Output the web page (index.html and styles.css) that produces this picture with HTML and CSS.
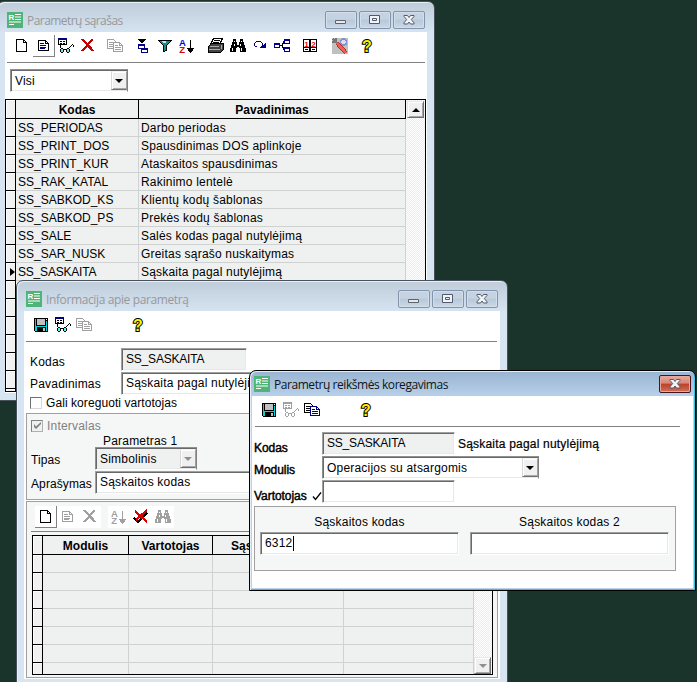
FILE: index.html
```html
<!DOCTYPE html>
<html lang="lt">
<head>
<meta charset="utf-8">
<title>Parametrų sąrašas</title>
<link rel="stylesheet" href="styles.css">
</head>
<body>
<svg class="defs" aria-hidden="true">
  <symbol id="logo" viewBox="0 0 16 16">
    <path fill="#4fb477" d="M0 0h16v16H0z"/>
    <text x="1.5" y="8" font-family="Liberation Sans" font-size="8" font-weight="bold" fill="#fff">R</text>
    <path fill="#fff" d="M8 2h6v1H8zM8 4.500h6v1H8zM8 7h6v1H8zM2 9.500h12v1H2zM2 12h5v1H2z"/>
  </symbol>
  <symbol id="page" viewBox="0 0 16 16">
    <path fill="#fff" stroke="#000" d="M2.500 1.500h7l3 3v9h-10z"/>
    <path fill="none" stroke="#000" d="M9.500 1.500v3h3"/>
  </symbol>
  <symbol id="sheet" viewBox="0 0 16 16">
    <path fill="#fff" stroke="currentColor" d="M2.500 2.500h7l3 3v7h-10z"/>
    <path fill="none" stroke="currentColor" d="M9.500 2.500v3h3"/>
    <path class="ink" d="M4 5h4v1H4zM4 7h6v1H4zM4 9h6v1H4zM4 11h5v-1H4z"/>
  </symbol>
  <symbol id="view" viewBox="0 0 16 16">
    <path fill="#fff" stroke="currentColor" d="M.5.5h8v6h-8z"/>
    <path class="ink" d="M0 0h9v2H0z"/>
    <path fill="currentColor" d="M2 3h2v1H2zM5 3h2v1H5zM2 5h2v1H2zM5 5h2v1H5zM2 7h1v3H2zM6 11h2v1H6zM11 9h1v1h-1zM12 8h1v1h-1zM13 7h1v1h-1zM14 6h1v1h-1zM15 7h1v2h-1z"/>
    <path fill="currentColor" d="M3 10h2v1h1v3H5v1H3v-1H2v-3h1zM9 10h2v1h1v3h-1v1H9v-1H8v-3h1z"/>
    <path class="lens" d="M3 11h2v3H3zM9 11h2v3H9z"/>
  </symbol>
  <symbol id="cross" viewBox="0 0 16 16">
    <path fill="currentColor" d="M1 1h2l4 4 5-4h1v1L9 7l3 3 2 3h-2L7 9l-4 4H1v-1l5-5-5-5z"/>
  </symbol>
  <symbol id="copy" viewBox="0 0 16 16">
    <path fill="#fff" stroke="currentColor" d="M.5 1.500h6l2 2v7h-8z"/>
    <path fill="currentColor" d="M2 4h4v1H2zM2 6h4v1H2zM2 8h4v1H2z"/>
    <path class="back" fill="#fff" d="M6.500 4.500h6l3 3v6h-9z"/>
    <path class="ink" d="M8 7h3v1H8zM8 9h6v1H8zM8 11h6v1H8zM12 5h1v2h2v1h-3z"/>
  </symbol>
  <symbol id="locate" viewBox="0 0 16 16">
    <path fill="#000" d="M3 1h8v1h-1v1H9v1H8v1H6V4H5V3H4V2H3z"/>
    <path fill="#fff" stroke="#000080" d="M3.500 6.500h6v4h-6zM6.500 10.500h6v4h-6z"/>
    <path fill="#000080" d="M3 6h7v2H3zM6 10h7v2H6z"/>
  </symbol>
  <symbol id="funnel" viewBox="0 0 16 16">
    <path fill="#208888" stroke="#000" d="M1.500 2.500h13l-5 5v5l-3 1v-6z"/>
    <path fill="#b8e8e8" d="M4 3h5v2H6z"/>
  </symbol>
  <symbol id="sort" viewBox="0 0 16 16">
    <text class="sort-a" x="0" y="7.500">A</text>
    <text class="sort-z" x=".3" y="15">Z</text>
    <path fill="currentColor" d="M11 2h1v8h3v1h-1v2h-1v1h-1v1h-1v-1h-1v-1H9v-2H8v-1h3z"/>
  </symbol>
  <symbol id="printer" viewBox="0 0 16 16">
    <path fill="#fff" stroke="#000" d="M5.500.5h9l-3 6h-9z"/>
    <path fill="#000" d="M6 2h6v1H6zM5 4h6v1H5z"/>
    <path fill="#444" stroke="#000" d="M.5 8.500l3-3h12v6l-3 3H.5z"/>
    <path fill="#aaa" d="M2 8h9v1H2zM1 11h11v1H1zM13 7h1v4h-1z"/>
  </symbol>
  <symbol id="binoculars" viewBox="0 0 16 16">
    <path fill="currentColor" d="M3 1h3v3h1v2h2V4h1V1h3v3h1v3h1v3h1v4h-6v-4H9V9H7v1H6v4H0v-4h1V7h1V4h1z"/>
    <path fill="#fff" d="M4 3h1v1H4zM11 3h1v1h-1zM4 6h1v2H4zM10 6h1v2h-1zM2 10h1v3H2zM11 10h1v3h-1zM7 6h2v1H7z"/>
  </symbol>
  <symbol id="redo" viewBox="0 0 16 16">
    <path fill="#000080" d="M4 3h5v1H4zM3 4h1v1H3zM2 5h1v3H2zM3 8h2v1H3zM9 4h1v1H9zM10 5h1v2h1V6h1V5h1v5H8V9h1V8h1z"/>
  </symbol>
  <symbol id="tree" viewBox="0 0 16 16">
    <path fill="none" stroke="#000" d="M5 7.500h3l2-4M8 7.500l2 4"/>
    <path fill="#fff" stroke="#000080" d="M.5 5.500h5v4h-5zM10.500 1.500h5v4h-5zM10.500 9.500h5v4h-5z"/>
    <path fill="#0000a0" d="M0 5h6v2H0zM10 1h6v2h-6zM10 9h6v2h-6z"/>
  </symbol>
  <symbol id="pair" viewBox="0 0 16 16">
    <path fill="#fff" stroke="#000" d="M1.500 1.500h6v12h-6zM8.500 1.500h6v12h-6z"/>
    <path fill="#000" d="M2 9h5v1H2zM9 9h5v1H9zM3 11h3v1H3zM10 11h3v1h-3z"/>
    <text x="2.200" y="8.500" class="pair-digit">1</text>
    <text x="9.200" y="8.500" class="pair-digit">2</text>
  </symbol>
  <symbol id="tools" viewBox="0 0 16 16">
    <path fill="#c0c0c0" d="M0 0h16v16H0z"/>
    <circle cx="11.500" cy="4" r="3" fill="#dde" stroke="#8090c8" stroke-width="1.500"/>
    <path stroke="#777" stroke-width="1.500" fill="none" d="M1 1l5 5M4 0v4H0"/>
    <path stroke="#b03030" stroke-width="4" d="M5 5l9 10"/>
    <path stroke="#f06050" stroke-width="2.500" d="M5 5l9 10"/>
  </symbol>
  <symbol id="help" viewBox="0 0 16 16">
    <text x="8" y="14" class="help-mark">?</text>
  </symbol>
  <symbol id="save" viewBox="0 0 16 16">
    <path fill="#000" d="M1 1h14v14H2l-1-1z"/>
    <path fill="#00d8d8" d="M2 2h1v7h10V4h1v10H2z"/>
    <path fill="#c0c0c0" d="M4 2h8v6H4z"/>
    <path fill="#000" d="M4 10h9v5H4z"/>
    <path fill="#c0c0c0" d="M10 11h2v3h-2z"/>
    <path fill="#fff" d="M13 2h1v1h-1z"/>
  </symbol>
  <symbol id="revoke" viewBox="0 0 16 16">
    <path fill="none" stroke="#000" stroke-width="2.500" d="M1 9l4 4 9-9"/>
    <path fill="none" stroke="#d80000" stroke-width="2.300" d="M2 2l12 11M14 1L3 11"/>
  </symbol>
  <symbol id="w-min" viewBox="0 0 14 12"><path fill="#e8e8e8" stroke="#5b6270" d="M1.500 6.500h10v3h-10z"/></symbol>
  <symbol id="w-max" viewBox="0 0 14 12"><path fill="#f0f3f7" stroke="#4f5a6e" d="M1.500 1.500h10v8h-10zM4.500 4.500h4v2h-4z"/></symbol>
  <symbol id="w-close" viewBox="0 0 14 12">
    <path fill="#f4f4f4" stroke="#4f5a6e" d="M2 1.500h3.500l1.500 2 1.500-2H12v1L9.300 5.500 12 8.800v1.200H8.500L7 8l-1.500 2H2V8.800l2.700-3.300L2 2.500z"/>
  </symbol>
</svg>

<section class="window window-list">
  <header class="titlebar">
    <svg class="logo"><use href="#logo"/></svg>
    <h1 class="title title-list">Parametrų sąrašas</h1>
    <div class="controls">
      <span class="control"><svg><use href="#w-min"/></svg></span>
      <span class="control"><svg><use href="#w-max"/></svg></span>
      <span class="control"><svg><use href="#w-close"/></svg></span>
    </div>
  </header>
  <div class="client">
    <nav class="toolbar">
      <span class="tool"><svg><use href="#page"/></svg></span>
      <span class="tool raised"><svg><use href="#sheet"/></svg></span>
      <span class="tool"><svg><use href="#view"/></svg></span>
      <span class="tool red"><svg><use href="#cross"/></svg></span>
      <span class="tool off gap-s"><svg><use href="#copy"/></svg></span>
      <span class="tool gap-m"><svg><use href="#locate"/></svg></span>
      <span class="tool"><svg><use href="#funnel"/></svg></span>
      <span class="tool"><svg><use href="#sort"/></svg></span>
      <span class="tool gap-l"><svg><use href="#printer"/></svg></span>
      <span class="tool"><svg><use href="#binoculars"/></svg></span>
      <span class="tool"><svg><use href="#redo"/></svg></span>
      <span class="tool"><svg><use href="#tree"/></svg></span>
      <span class="tool gap-m"><svg><use href="#pair"/></svg></span>
      <span class="tool gap-xl"><svg><use href="#tools"/></svg></span>
      <span class="tool gap-s"><svg><use href="#help"/></svg></span>
    </nav>
    <div class="combo combo-filter"><span>Visi</span><i class="drop"></i></div>
    <div class="table table-list">
      <div class="rows">
        <div class="row head"><b class="mark"></b><b>Kodas</b><b>Pavadinimas</b></div>
        <div class="row"><i class="mark"></i><span class="code-cell">SS_PERIODAS</span><span>Darbo periodas</span></div>
        <div class="row"><i class="mark"></i><span class="code-cell">SS_PRINT_DOS</span><span>Spausdinimas DOS aplinkoje</span></div>
        <div class="row"><i class="mark"></i><span class="code-cell">SS_PRINT_KUR</span><span>Ataskaitos spausdinimas</span></div>
        <div class="row"><i class="mark"></i><span class="code-cell">SS_RAK_KATAL</span><span>Rakinimo lentelė</span></div>
        <div class="row"><i class="mark"></i><span class="code-cell">SS_SABKOD_KS</span><span>Klientų kodų šablonas</span></div>
        <div class="row"><i class="mark"></i><span class="code-cell">SS_SABKOD_PS</span><span>Prekės kodų šablonas</span></div>
        <div class="row"><i class="mark"></i><span class="code-cell">SS_SALE</span><span>Salės kodas pagal nutylėjimą</span></div>
        <div class="row"><i class="mark"></i><span class="code-cell">SS_SAR_NUSK</span><span>Greitas sąrašo nuskaitymas</span></div>
        <div class="row"><i class="mark current"></i><span class="caps">SS_SASKAITA</span><span>Sąskaita pagal nutylėjimą</span></div>
        <div class="row"><i class="mark"></i><span></span><span></span></div>
        <div class="row"><i class="mark"></i><span></span><span></span></div>
        <div class="row"><i class="mark"></i><span></span><span></span></div>
        <div class="row"><i class="mark"></i><span></span><span></span></div>
        <div class="row"><i class="mark"></i><span></span><span></span></div>
        <div class="row"><i class="mark"></i><span></span><span></span></div>
        <div class="row"><i class="mark"></i><span></span><span></span></div>
      </div>
      <div class="scroll"><i class="scroll-btn up"></i></div>
    </div>
  </div>
</section>

<section class="window window-info">
  <header class="titlebar">
    <svg class="logo"><use href="#logo"/></svg>
    <h1 class="title title-info">Informacija apie parametrą</h1>
    <div class="controls">
      <span class="control"><svg><use href="#w-min"/></svg></span>
      <span class="control"><svg><use href="#w-max"/></svg></span>
      <span class="control"><svg><use href="#w-close"/></svg></span>
    </div>
  </header>
  <div class="client">
    <nav class="toolbar">
      <span class="tool"><svg><use href="#save"/></svg></span>
      <span class="tool"><svg><use href="#view"/></svg></span>
      <span class="tool off nudge"><svg><use href="#copy"/></svg></span>
      <span class="tool gap-help"><svg><use href="#help"/></svg></span>
    </nav>
    <div class="info-form">
      <div class="line"><label>Kodas</label><div class="field readonly caps w-code">SS_SASKAITA</div></div>
      <div class="line second"><label>Pavadinimas</label><div class="field w-name">Sąskaita pagal nutylėjimą</div></div>
      <div class="check-line tight"><i class="check"></i>Gali koreguoti vartotojas</div>
    </div>
    <div class="group group-type">
      <div class="check-line muted"><i class="check on"><svg viewBox="0 0 9 9"><path d="M1 3v3l2 2 5-5V1L3 5.500z"/></svg></i>Intervalas</div>
      <div class="caption">Parametras 1</div>
      <div class="line"><label>Tipas</label><div class="combo readonly combo-type"><span>Simbolinis</span><i class="drop muted"></i></div></div>
      <div class="line"><label>Aprašymas</label><div class="field w-desc">Sąskaitos kodas</div></div>
    </div>
    <div class="group group-values">
      <nav class="toolbar mini">
        <span class="tool raised"><svg><use href="#page"/></svg></span>
        <span class="tool off"><svg><use href="#sheet"/></svg></span>
        <span class="tool off"><svg><use href="#cross"/></svg></span>
        <span class="tool off gap-l"><svg><use href="#sort"/></svg></span>
        <span class="tool"><svg><use href="#revoke"/></svg></span>
        <span class="tool off"><svg><use href="#binoculars"/></svg></span>
      </nav>
      <div class="table table-values">
        <div class="rows">
          <div class="row head"><b class="mark"></b><b>Modulis</b><b>Vartotojas</b><b>Sąskaitos kodas</b><b></b></div>
          <div class="row"><i class="mark"></i><span></span><span></span><span></span><span></span></div>
          <div class="row"><i class="mark"></i><span></span><span></span><span></span><span></span></div>
          <div class="row"><i class="mark"></i><span></span><span></span><span></span><span></span></div>
          <div class="row"><i class="mark"></i><span></span><span></span><span></span><span></span></div>
          <div class="row"><i class="mark"></i><span></span><span></span><span></span><span></span></div>
          <div class="row"><i class="mark"></i><span></span><span></span><span></span><span></span></div>
          <div class="row"><i class="mark"></i><span></span><span></span><span></span><span></span></div>
        </div>
        <div class="scroll end"><i class="scroll-btn down"></i></div>
      </div>
    </div>
  </div>
</section>

<section class="window window-edit">
  <header class="titlebar">
    <svg class="logo"><use href="#logo"/></svg>
    <h1 class="title title-edit">Parametrų reikšmės koregavimas</h1>
    <div class="controls"><span class="control close"><svg><use href="#w-close"/></svg></span></div>
  </header>
  <div class="client">
    <nav class="toolbar">
      <span class="tool"><svg><use href="#save"/></svg></span>
      <span class="tool off"><svg><use href="#view"/></svg></span>
      <span class="tool nudge"><svg><use href="#copy"/></svg></span>
      <span class="tool gap-help"><svg><use href="#help"/></svg></span>
    </nav>
    <div class="edit-form">
      <div class="line"><label class="low">Kodas</label><div class="field readonly caps w-edit">SS_SASKAITA</div><span class="note">Sąskaita pagal nutylėjimą</span></div>
      <div class="line"><label>Modulis</label><div class="combo combo-module"><span>Operacijos su atsargomis</span><i class="drop"></i></div></div>
      <div class="line"><label class="low">Vartotojas<svg class="tick" viewBox="0 0 10 10"><path d="M1 5.500l2.500 3L9 1.500"/></svg></label><div class="field w-edit"></div></div>
    </div>
    <div class="group group-codes">
      <div class="code"><label>Sąskaitos kodas</label><div class="field">6312<i class="caret"></i></div></div>
      <div class="code"><label>Sąskaitos kodas 2</label><div class="field"></div></div>
    </div>
  </div>
</section>
</body>
</html>
```
FILE: styles.css
```css
* { box-sizing: border-box; }
html, body { margin: 0; height: 100%; }
body {
  position: relative;
  overflow: hidden;
  background: #1a332b;
  color: #000;
  font: 12px/14px "Liberation Sans", Arial, sans-serif;
  letter-spacing: .2px;
  white-space: nowrap;
}
i { font-style: normal; }
.defs { display: none; }
.caps { letter-spacing: -.2px; }
.code-cell { letter-spacing: 0; }

/* Windows on the desktop */
.window {
  position: absolute;
  display: flex;
  flex-direction: column;
  padding: 0 7px 7px;
  border: 1px solid #48505a;
  border-radius: 7px 7px 0 0;
  background: linear-gradient(#bfcddb, #d7e4f2 32px);
  box-shadow: inset 1px 1px #e8eff7;
}
.window-list { left: -3px; top: 1px; width: 438px; height: 400px; }
.window-info { left: 16px; top: 280px; width: 492px; height: 407px; }
.window-edit {
  left: 249px; top: 370px; width: 447px; height: 221px;
  padding: 0 2px 2px;
  border-color: #000;
  background: linear-gradient(#99b4d1, #b9d1ea 26px);
  box-shadow: inset 1px 1px #e4eef8, inset -1px -1px #35c0e0;
}
.titlebar { display: flex; align-items: center; flex: none; height: 30px; padding: 6px 2px 0; }
.window-edit .titlebar { height: 25px; padding-top: 1px; }
.logo { width: 16px; height: 16px; }
.title {
  margin: 0 0 0 4px;
  padding-top: 2px;
  font: 12px/16px "Open Sans", "Noto Sans", sans-serif;
  color: #98989c;
}
.title-list { letter-spacing: -.55px; }
.title-info { letter-spacing: -.38px; }
.title-edit { letter-spacing: -.44px; color: #101418; }
.controls { display: flex; gap: 2px; margin-left: auto; }
.control {
  display: flex;
  align-items: center;
  justify-content: center;
  width: 32px; height: 18px;
  border: 1px solid #8493ad;
  border-radius: 2px;
  background: linear-gradient(#c5d2e1 45%, #b9c8d9 50%, #cad8e7);
  box-shadow: inset 0 0 0 1px #d3deea;
}
.control svg { width: 14px; height: 12px; }
.close {
  border-color: #45171c;
  background: linear-gradient(#e8a99d, #d98576 45%, #bb4029 50%, #d0705a);
  box-shadow: inset 0 0 0 1px #e6a79c;
}
.client { flex: 1; background: #fff; }

/* Toolbars */
.toolbar {
  display: flex;
  height: 31px;
  padding: 3px 0 0 6px;
  position: relative;
  margin-right: 2px;
}
.toolbar::after { content: ""; position: absolute; left: 2px; right: 0; bottom: 0; height: 1px; background: #808080; }
.window-info > .client > .toolbar { margin-right: 3px; }
.window-edit .toolbar { margin-right: 13px; }
.window-edit .toolbar::after { left: 3px; }
.tool {
  display: flex;
  align-items: center;
  justify-content: center;
  width: 22px; height: 22px;
  color: #000;
  --ink: #000080;
  --lens: #60f0f0;
  --sort-a: #0000e0;
  --sort-z: #e00000;
}
.tool svg { width: 16px; height: 16px; shape-rendering: crispEdges; }
.raised { border: solid #808080; border-width: 0 1px 1px 0; }
.red { color: #c00000; }
.off { color: #a0a0a0; --ink: #a0a0a0; --lens: #fff; --sort-a: #a0a0a0; --sort-z: #a0a0a0; }
.ink { fill: var(--ink); }
.back { stroke: var(--ink); }
.lens { fill: var(--lens); }
.nudge { padding-right: 3px; }
.gap-s { margin-left: 5px; }
.gap-m { margin-left: 6px; }
.gap-l { margin-left: 7px; }
.gap-xl { margin-left: 8px; }
.gap-help { margin-left: 31px; }
.sort-a, .sort-z { font: bold 9.5px "Liberation Sans", Arial, sans-serif; letter-spacing: 0; fill: var(--sort-a); }
.sort-z { fill: var(--sort-z); }
.pair-digit { font: bold 8px "Liberation Sans", Arial, sans-serif; letter-spacing: 0; fill: #f00000; }
.help-mark {
  font: bold 16px "Liberation Sans", Arial, sans-serif;
  letter-spacing: 0;
  text-anchor: middle;
  fill: #ffee00;
  stroke: #000;
  stroke-width: 2px;
  paint-order: stroke;
}

/* Inputs */
.field, .combo {
  display: flex;
  align-items: center;
  height: 23px;
  padding: 0 0 1px 4px;
  border: 1px solid;
  border-color: #a0a0a0 #fff #fff #a0a0a0;
  background: #fff;
  box-shadow: inset 1px 1px #696969, inset -1px -1px #e8e8e8;
}
.field.readonly, .combo.readonly { background: #eff1f0; }
.combo {
  justify-content: space-between;
  padding: 1px 0 1px 1px;
  border-color: #909090 #808080 #fff #909090;
}
.combo > span { padding: 1px 0 0 3px; }
.drop {
  display: flex;
  align-items: center;
  justify-content: center;
  width: 16px; height: 19px;
  background: #f0f0f0;
  border: 1px solid;
  border-color: #f4f4f4 #a0a0a0 #707070 #d8d8d8;
  box-shadow: inset 1px 1px #fff, inset 0 -1px #a8a8a8;
}
.drop::after { content: ""; border: solid transparent; border-width: 4px 4px 0; border-top-color: #000; }
.drop.muted::after { border-top-color: #909090; }
.combo-filter { width: 118px; margin: 6px 0 7px 5px; }

/* Data tables */
.table { display: flex; border: 1px solid #000; overflow: hidden; }
.row { display: grid; height: 18px; }
.row > * { border: solid #d0d2d1; border-width: 0 1px 1px 0; background: #eff1f0; line-height: 18px; padding-left: 2px; overflow: hidden; }
.row > .mark { border-color: #000; background: #f1f1f1; box-shadow: inset 1px 1px #fff; padding: 0; }
.head { height: 19px; }
.row.head > b { border-color: #000; text-align: center; padding: 0; line-height: 20px; letter-spacing: 0; }
.row > .current::after {
  content: "";
  display: block;
  margin: 5px 0 0 4px;
  border: solid transparent;
  border-width: 4px 0 4px 5px;
  border-left-color: #000;
}
.scroll { flex: 1; padding: 1px; background: repeating-conic-gradient(#ececec 0 25%, #fff 0 50%) 0 0 / 2px 2px; }
.scroll.end { display: flex; align-items: flex-end; padding: 0; }
.scroll-btn {
  display: flex;
  align-items: center;
  justify-content: center;
  width: 17px; height: 17px;
  background: #f0f0f0;
  border: 1px solid;
  border-color: #e8e8e8 #707070 #707070 #e8e8e8;
  box-shadow: inset 1px 1px #fff, inset -1px -1px #a8a8a8;
}
.scroll-btn::after { content: ""; border: solid transparent; }
.up::after { border-width: 0 4px 4px; border-bottom-color: #000; }
.down::after { border-width: 4px 4px 0; border-top-color: #909090; }
.table-list { width: 421px; height: 293px; }
.table-list .row { grid-template-columns: 10px 123px 267px; }
.table-values { width: 461px; height: 140px; margin: 3px 0 0 5px; }
.table-values .row { grid-template-columns: 10px 86px 84px 131px 130px; }

/* Forms */
.line { display: flex; height: 24px; }
.group { border: 1px solid #a0a0a0; background: #f5f7f6; }
.check-line { display: flex; align-items: center; height: 13px; gap: 4px; }
.check-line.tight { letter-spacing: .07px; }
.check {
  display: flex;
  align-items: center;
  justify-content: center;
  width: 12px; height: 12px;
  border: 1px solid;
  border-color: #707070 #d8d8d8 #d8d8d8 #707070;
  background: #fff;
}
.check.on { background: #f0f0f0; border-color: #808080 #b0b0b0 #b0b0b0 #808080; }
.check svg { width: 9px; height: 9px; fill: #808080; }
.muted { color: #808080; }

.info-form { padding: 6px 0 0 6px; }
.info-form label { width: 91px; padding-top: 7px; }
.info-form .second label { padding-top: 5px; }
.w-code { width: 126px; }
.w-name { width: 360px; }
.window-info .group { width: 472px; margin-left: 2px; }
.group-type { height: 87px; margin-top: 4px; padding: 5px 0 0 4px; }
.group-type label { width: 64px; padding-top: 6px; letter-spacing: .1px; }
.caption { height: 15px; padding: 2px 0 0 72px; }
.combo-type { width: 102px; }
.w-desc { width: 390px; }
.group-values { height: 177px; margin-top: 1px; }
.toolbar.mini { height: 30px; padding: 4px 0 0 8px; margin-right: 5px; }
.toolbar.mini::after { left: 4px; }
.mini .tool { background: #fff; }

.edit-form { padding: 5px 0 0 2px; }
.edit-form label { display: flex; width: 68px; padding-top: 7px; letter-spacing: -.05px; -webkit-text-stroke: .45px #000; }
.edit-form label.low { padding-top: 9px; }
.w-edit { width: 133px; }
.combo-module { width: 217px; }
.note { padding: 5px 0 0 3px; -webkit-text-stroke: .2px #000; }
.tick { width: 10px; height: 10px; margin: 2px 0 0 auto; fill: none; stroke: #000; stroke-width: 1.3px; }
.group-codes { display: flex; gap: 11px; width: 422px; height: 65px; margin: 2px 0 0 2px; padding: 8px 0 0 5px; }
.code { display: flex; flex-direction: column; width: 199px; gap: 3px; text-align: center; }
.caret { width: 1px; height: 15px; background: #000; }
```
